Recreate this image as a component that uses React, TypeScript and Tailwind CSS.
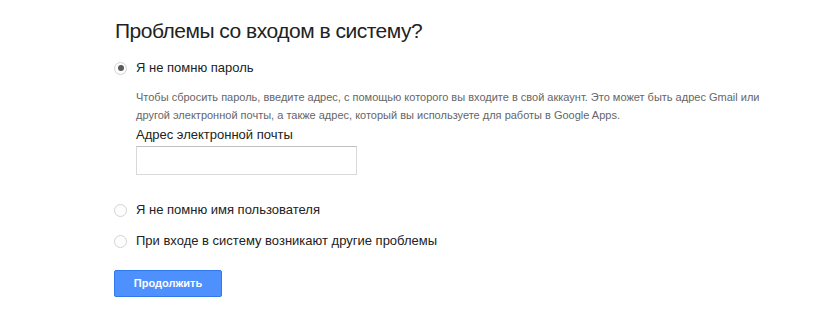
import { useState } from 'react'

const options = [
  { id: 'password', label: 'Я не помню пароль' },
  { id: 'username', label: 'Я не помню имя пользователя' },
  { id: 'other', label: 'При входе в систему возникают другие проблемы' },
]

function Radio({ checked }: { checked: boolean }) {
  return (
    <span className="w-[13px] h-[13px] rounded-full border border-[#d3d3d3] bg-[#fdfdfd] flex items-center justify-center shrink-0">
      {checked && <span className="w-[6px] h-[6px] rounded-full bg-[#5a5a5a]" />}
    </span>
  )
}

export default function App() {
  const [selected, setSelected] = useState('password')

  return (
    <div className="w-[825px] h-[331px] bg-white font-['Liberation_Sans',Arial,sans-serif] text-[#222]">
      <div className="pl-[114px] pt-4">
        <h1 className="pl-[1px] text-[21px] leading-[30px] tracking-[-0.5px] font-normal">
          Проблемы со входом в систему?
        </h1>

        <label className="mt-[12px] h-5 flex items-center gap-[9px] cursor-pointer" onClick={() => setSelected('password')}>
          <Radio checked={selected === 'password'} />
          <span className="text-[13px]">{options[0].label}</span>
        </label>

        <div className="pl-[22px]">
          <p className="mt-[10px] text-[11px] leading-[18px] text-[#666] max-w-[640px]">
            Чтобы сбросить пароль, введите адрес, с помощью которого вы входите в свой аккаунт. Это может быть адрес Gmail или
            другой электронной почты, а также адрес, который вы используете для работы в Google Apps.
          </p>
          <div className="mt-[3px] text-[13px] leading-[16px]">Адрес электронной почты</div>
          <input
            type="text"
            className="mt-[3px] block w-[221px] h-[29px] border border-[#d9d9d9] border-t-[#c0c0c0] bg-white outline-none"
          />
        </div>

        <div className="mt-[25px] flex flex-col gap-[11px]">
          {options.slice(1).map((o) => (
            <label key={o.id} className="h-5 flex items-center gap-[9px] cursor-pointer" onClick={() => setSelected(o.id)}>
              <Radio checked={selected === o.id} />
              <span className="text-[13px]">{o.label}</span>
            </label>
          ))}
        </div>

        <button className="mt-[19px] w-[108px] h-[27px] rounded-[2px] border border-[#3079ed] bg-[#4d90fe] text-white text-[11px] font-bold">
          Продолжить
        </button>
      </div>
    </div>
  )
}
